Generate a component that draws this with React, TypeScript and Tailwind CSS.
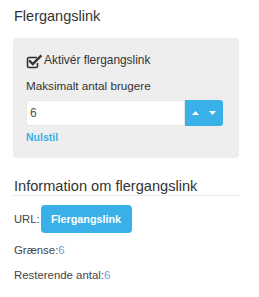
import React from "react";

export default function App() {
  return (
    <div
      className="w-[259px] h-[297px] bg-white px-[13px] text-[12px] text-[#444]"
      style={{ fontFamily: '"Liberation Sans", Arial, sans-serif' }}
    >
      <div className="pt-[6px] pl-[1px] text-[14.5px] leading-[20px] text-[#333]">Flergangslink</div>
      <div className="mt-[12px] w-[226px] rounded-[4px] bg-[#eeeeee] pl-[13px] pr-[16px] pt-[15px] pb-[14px]">
        <div className="flex items-center h-[16px] text-[11.9px] text-[#333]">
          <svg width="17" height="16" viewBox="0 0 17 16" className="mr-[1px]">
            <path
              d="M11 4.5 H3 a1.5 1.5 0 0 0 -1.5 1.5 V13 a1.5 1.5 0 0 0 1.5 1.5 H10 a1.5 1.5 0 0 0 1.5 -1.5 V10"
              fill="none"
              stroke="#333"
              strokeWidth="1.6"
            />
            <path d="M4 8.3 L6.8 11 L14.5 3.3" fill="none" stroke="#333" strokeWidth="2.4" strokeLinecap="square" />
          </svg>
          <span>Aktivér flergangslink</span>
        </div>
        <div className="mt-[9px] h-[16px] leading-[16px] text-[11.7px] text-[#333]">Maksimalt antal brugere</div>
        <div className="mt-[6px] flex h-[26px]">
          <div className="flex-1 bg-white rounded-l-[3px] border border-[#e6e6e6] flex items-center pl-[3px] text-[#555]">
            6
          </div>
          <div className="w-[38px] bg-[#39b0e8] rounded-r-[3px] flex items-center justify-center gap-[10px]">
            <svg width="7" height="4" viewBox="0 0 7 4">
              <path d="M0 4 L3.5 0 L7 4 Z" fill="white" />
            </svg>
            <svg width="7" height="4" viewBox="0 0 7 4">
              <path d="M0 0 L3.5 4 L7 0 Z" fill="white" />
            </svg>
          </div>
        </div>
        <div className="mt-[4px] h-[14px] leading-[14px] text-[10.5px] font-bold text-[#3aaee3]">Nulstil</div>
      </div>
      <div className="mt-[20px] w-[226px] border-b border-[#e5e5e5] pl-[1px] text-[14.6px] leading-[17px] text-[#333]">
        Information om flergangslink
      </div>
      <div className="mt-[9px] flex items-center h-[28px] pl-[1px] text-[11.2px]">
        <span>URL:</span>
        <div className="ml-[1px] w-[91px] h-[28px] rounded-[4px] bg-[#39b0e8] text-white text-[10.8px] font-bold flex items-center justify-center">
          Flergangslink
        </div>
      </div>
      <div className="mt-[10px] h-[14px] leading-[14px] pl-[1px] text-[11.4px]">
        Grænse:<span className="text-[#6a9fd6]">6</span>
      </div>
      <div className="mt-[11px] h-[14px] leading-[14px] pl-[1px] text-[11.4px]">
        Resterende antal:<span className="text-[#6a9fd6]">6</span>
      </div>
    </div>
  );
}
